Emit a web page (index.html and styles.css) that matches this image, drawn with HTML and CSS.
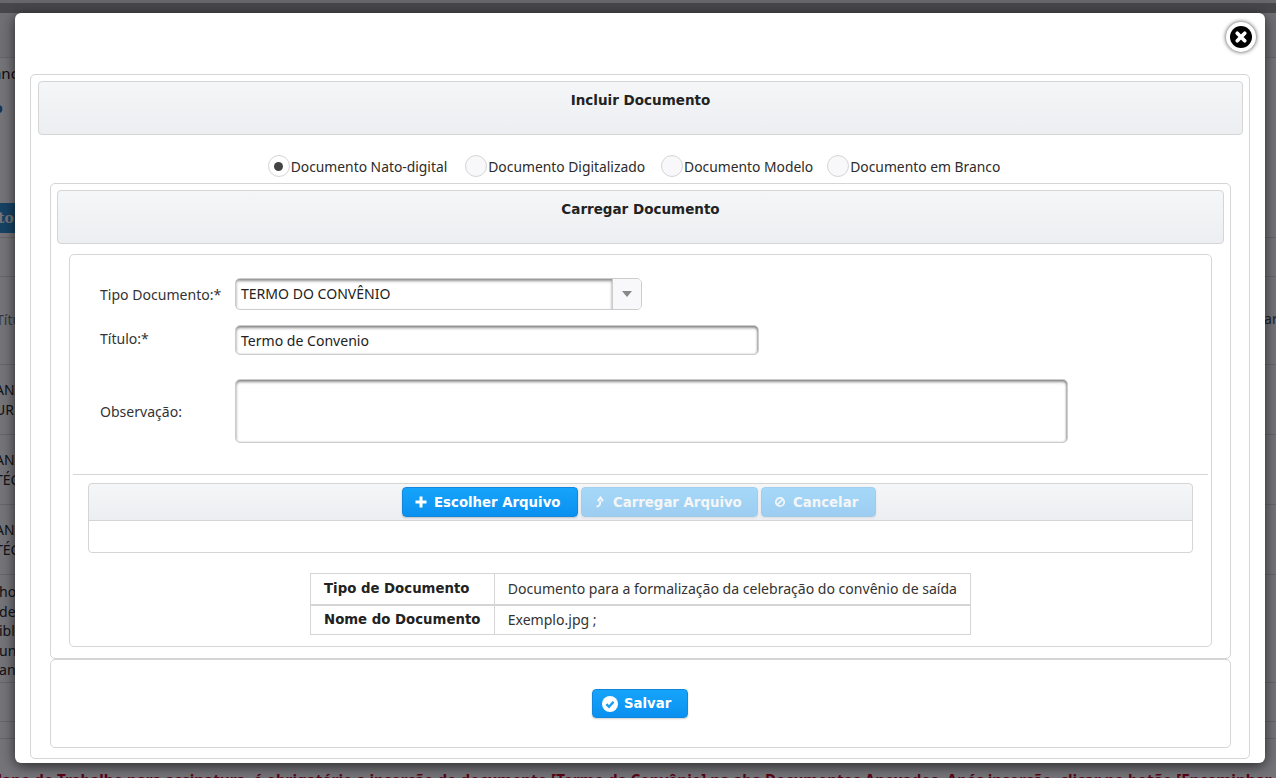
FILE: index.html
```html
<!DOCTYPE html>
<html lang="pt-BR">
<head>
<meta charset="utf-8">
<title>Incluir Documento</title>
<link rel="stylesheet" href="styles.css">
</head>
<body>
<div class="page">
  <div class="topbar"></div>
  <div class="row r-top"></div>
  <div class="row r-title">
    <span class="frag big">Planc</span>
    <span class="frag blue">o</span>
    <span class="bgbtn">to</span>
  </div>
  <div class="row r-empty"></div>
  <div class="row r-head"><span class="frag lighter">Título</span><span class="frag-right">ar</span></div>
  <div class="row r-data"><span class="frag">ANÁLISE<br>URBANO</span></div>
  <div class="row r-data"><span class="frag">ANÁLISE<br>TÉCNICA</span></div>
  <div class="row r-data"><span class="frag">ANÁLISE<br>TÉCNICA</span></div>
  <div class="row r-para"><span class="frag">ho<br>de<br>ibl<br>uni<br>an</span></div>
  <div class="row r-gap"></div>
  <div class="row r-gap2"></div>
  <p class="warn">Plano de Trabalho para assinatura, é obrigatório a inserção do documento [Termo de Convênio] na aba Documentos Anexados. Após inserção, clicar no botão [Encaminhar</p>
</div>
<div class="overlay"></div>

<div class="modal">
  <button class="close" type="button" aria-label="Fechar">
    <svg viewBox="0 0 20 20" width="22" height="22"><circle cx="10" cy="10" r="10" fill="#000"/><path d="M6.6 6.6l6.8 6.8M13.4 6.6l-6.8 6.8" stroke="#fff" stroke-width="3.4" stroke-linecap="round"/></svg>
  </button>
  <section class="panel outer">
    <h2 class="bar">Incluir Documento</h2>
    <div class="radios">
      <label class="radio"><span class="dot on"></span>Documento Nato-digital</label>
      <label class="radio"><span class="dot"></span>Documento Digitalizado</label>
      <label class="radio"><span class="dot"></span>Documento Modelo</label>
      <label class="radio"><span class="dot"></span>Documento em Branco</label>
    </div>
    <section class="panel inner">
      <h2 class="bar">Carregar Documento</h2>
      <div class="panel form">
        <div class="fields">
          <div class="field f-tipo">
            <label class="lbl">Tipo Documento:*</label>
            <div class="select"><span class="select-val">TERMO DO CONVÊNIO</span><span class="select-btn"><i class="caret"></i></span></div>
          </div>
          <div class="field f-titulo">
            <label class="lbl">Título:*</label>
            <div class="input">Termo de Convenio</div>
          </div>
          <div class="field f-obs">
            <label class="lbl">Observação:</label>
            <div class="textarea"></div>
          </div>
        </div>
        <hr class="sep">
        <div class="upload">
          <div class="upload-bar">
            <span class="btn b-choose">
              <svg class="ico" viewBox="0 0 12 12" width="12" height="12"><path d="M6 0.5v11M0.5 6h11" stroke="#fff" stroke-width="3"/></svg>
              Escolher Arquivo</span>
            <span class="btn off b-load">
              <svg class="ico" viewBox="0 0 12 12" width="12" height="12"><path d="M2.5 10.5c3 0 3.8-1.5 3.8-5.5M3.8 5.2L6.4 1.6 9 5.2" fill="none" stroke="#fff" stroke-width="2"/></svg>
              Carregar Arquivo</span>
            <span class="btn off b-cancel">
              <svg class="ico" viewBox="0 0 12 12" width="12" height="12"><circle cx="6" cy="6" r="4.2" fill="none" stroke="#fff" stroke-width="1.7"/><path d="M3 9l6-6" stroke="#fff" stroke-width="1.7"/></svg>
              Cancelar</span>
          </div>
          <div class="upload-body"></div>
        </div>
        <table class="info">
          <tr><th>Tipo de Documento</th><td>Documento para a formalização da celebração do convênio de saída</td></tr>
          <tr><th>Nome do Documento</th><td>Exemplo.jpg ;</td></tr>
        </table>
      </div>
    </section>
    <section class="panel actions">
      <span class="btn save">
        <svg class="ico" viewBox="0 0 16 16" width="16" height="16"><circle cx="8" cy="8" r="8" fill="#fff"/><path d="M4.4 8.2l2.6 2.6 4.6-5" fill="none" stroke="#1a9df2" stroke-width="2.4"/></svg>
        Salvar</span>
    </section>
  </section>
</div>
</body>
</html>
```

FILE: styles.css
```css
* { box-sizing: border-box; }
html, body { margin: 0; height: 100%; overflow: hidden; }
body { font-family: "Noto Sans", "DejaVu Sans", sans-serif; font-size: 14.05px; color: #222; background: #fff; }

/* Page behind the dialog */
.page { height: 778px; overflow: hidden; background: #fff; color: #222; }
.topbar { height: 3px; background: #e2e2e2; }
.row { position: relative; border-bottom: 1px solid #ddd; overflow: hidden; white-space: nowrap; }
.frag { display: block; margin-left: -3px; }
.r-top { height: 55px; background: linear-gradient(#999 0 10px, #f4f4f4 10px); }
.r-title { height: 180px; padding-top: 5px; }
.big { margin-left: -20px; font-size: 15px; color: #111; }
.blue { margin: 15px 0 0 -6px; color: #1669b4; font-weight: bold; }
.bgbtn { display: block; width: 60px; height: 30px; margin-top: 86px; padding-top: 5px; background: #2c8fd0; color: #fff; font: bold 14px/20px "DejaVu Serif", serif; text-indent: -2px; }
.r-empty { height: 39px; }
.r-head { height: 88px; padding-top: 33px; }
.lighter { color: #777; margin-left: -4px; }
.frag-right { position: absolute; left: 1264px; top: 32px; color: #444; }
.r-data { height: 70px; padding-top: 15px; line-height: 20px; }
.r-data .frag { margin-left: -5px; }
.r-para { height: 108px; padding-top: 7px; line-height: 19.5px; }
.r-para .frag { margin-left: -1px; }
.r-gap { height: 39px; }
.r-gap2 { height: 17px; }
.warn { margin: 31px 0 0 -12px; white-space: nowrap; font-weight: bold; font-size: 15.2px; line-height: 20px; color: #c8001e; }

.overlay { position: fixed; inset: 0; background: rgba(8, 8, 16, .56); }

/* Dialog */
.modal { position: fixed; left: 15px; top: 13px; width: 1250px; height: 750px; padding: 61px 15px 0; background: #fff; border-radius: 6px; box-shadow: 0 3px 14px rgba(0, 0, 0, .65); }
.close { position: absolute; right: 9px; top: 9px; width: 30px; height: 30px; padding: 4px; border: 0; border-radius: 50%; background: #fff; box-shadow: 0 0 4px rgba(0, 0, 0, .75); display: flex; }

.panel { border: 1px solid #d5d5d5; border-radius: 5px; background: #fff; }
.outer { height: 685px; padding: 6px 6px 0 7px; }
.bar { margin: 0; height: 54px; padding-top: 9px; border: 1px solid #d5d5d5; border-radius: 4px; background: linear-gradient(#f5f6f8, #eceef1); text-align: center; font: bold 13.5px/18px "DejaVu Sans", sans-serif; color: #222; }

.radios { display: flex; justify-content: center; height: 48px; padding-top: 20px; gap: 16px; margin-right: 13px; font-size: 13.85px; }
.radio { display: flex; align-items: center; height: 22px; color: #2b2b2b; }
.radio:nth-child(2) { margin-left: 2px; }
.radio:nth-child(4) { margin-left: -2px; }
.dot { width: 22px; height: 22px; margin-right: 1px; border: 1px solid #d5d5d5; border-radius: 50%; background: #f8f8fa; display: flex; align-items: center; justify-content: center; }
.dot.on { background: #fff; }
.dot.on::after { content: ""; width: 9px; height: 9px; border-radius: 50%; background: #444; }

.inner { margin: 0 12px; height: 476px; padding: 6px 6px 0; }
.form { margin: 10px 12px 0; height: 393px; padding: 0 3px; }
.fields { height: 219px; padding-left: 27px; }
.field { display: flex; }
.lbl { width: 135px; flex: none; color: #333; }
.f-tipo { padding-top: 23px; height: 70px; }
.f-tipo .lbl { padding-top: 7px; }
.f-titulo { height: 54px; }
.f-titulo .lbl { padding-top: 4px; }
.f-obs .lbl { padding-top: 23px; }

.select { display: flex; width: 407px; height: 32px; border: 1px solid #ccc; border-radius: 5px; overflow: hidden; }
.select-val { flex: 1; padding: 5px 0 0 5px; box-shadow: inset 0 2px 3px rgba(0, 0, 0, .45); color: #222; }
.select-btn { width: 29px; flex: none; border-left: 1px solid #ccc; background: #f8f8fa; display: flex; align-items: center; justify-content: center; }
.caret { width: 0; height: 0; border: 5px solid transparent; border-top: 6px solid #888; border-bottom: 0; }
.input { width: 524px; height: 30px; padding: 5px; border: 1px solid #ccc; border-radius: 5px; box-shadow: inset 0 2px 3px rgba(0, 0, 0, .45), inset -1px 0 2px rgba(0, 0, 0, .2); color: #222; }
.textarea { width: 833px; height: 64px; border: 1px solid #ccc; border-radius: 5px; box-shadow: inset 0 2px 3px rgba(0, 0, 0, .45), inset -1px 0 2px rgba(0, 0, 0, .2); }

.sep { margin: 0; border: 0; border-top: 1px solid #d5d5d5; }
.upload { margin: 8px 15px 0; height: 70px; border: 1px solid #d5d5d5; border-radius: 4px; background: linear-gradient(#f5f6f8, #eceef1) top / 100% 36px no-repeat; }
.upload-bar { height: 36px; padding: 3px 3px 0 0; display: flex; justify-content: center; gap: 3px; }
.upload-body { border-top: 1px solid #d5d5d5; height: 32px; }

.btn { display: inline-flex; align-items: center; gap: 7px; height: 30px; padding-left: 12px; background: linear-gradient(#16a4fb, #0a90f0); border: 1px solid #1188dd; border-radius: 4px; color: #fff; font: bold 13.3px "DejaVu Sans", sans-serif; white-space: nowrap; box-shadow: 0 1px 2px rgba(0, 0, 0, .2); }
.btn.off { opacity: .35; }
.b-choose { width: 176px; }
.b-load { width: 177px; }
.b-cancel { width: 115px; }
.ico { flex: none; }

.info { margin: 20px auto 0; border-collapse: collapse; width: 661px; }
.info th, .info td { border: 1px solid #d5d5d5; height: 31px; padding: 0 13px; color: #333; font-weight: normal; text-align: left; white-space: nowrap; }
.info tr + tr th, .info tr + tr td { border-top-width: 2px; height: 30px; }
.info th { width: 184px; font: bold 13.3px "DejaVu Sans", sans-serif; color: #222; }

.actions { margin: 0 12px; height: 89px; display: flex; justify-content: center; padding: 29px 1px 0 0; }
.save { width: 96px; height: 29px; padding-left: 9px; gap: 6px; }
```
